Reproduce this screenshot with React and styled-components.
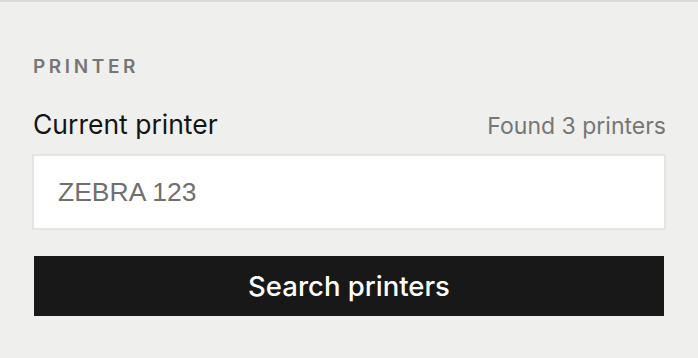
import React from "react";
import styled, { createGlobalStyle } from "styled-components";

const Global = createGlobalStyle`
  html, body { margin: 0; padding: 0; background: #efefed; }
  body { font-family: Inter, "Noto Sans", sans-serif; }
  * { box-sizing: border-box; }
`;

const Panel = styled.section`
  border-top: 2px solid #d9d9d7;
  padding: 0 32px;
  height: 358px;
`;

const SectionLabel = styled.h2`
  margin: 0;
  padding-top: 53px;
  padding-left: 1px;
  font-size: 19px;
  line-height: 24px;
  font-weight: 600;
  letter-spacing: 0.19em;
  color: #767676;
  text-transform: uppercase;
`;

const FieldHeader = styled.div`
  display: flex;
  justify-content: space-between;
  align-items: baseline;
  margin-top: 29px;
  padding-left: 1px;
  height: 32px;
`;

const FieldLabel = styled.label`
  font-size: 26.5px;
  line-height: 32px;
  color: #141414;
`;

const FieldHint = styled.span`
  font-size: 23px;
  line-height: 32px;
  color: #767676;
`;

const TextInput = styled.input`
  display: block;
  width: 100%;
  height: 76px;
  margin-top: 14px;
  border: 2px solid #e4e4e2;
  background: #fff;
  padding: 0 24px;
  font-family: "Liberation Sans", Arial, sans-serif;
  font-size: 26.5px;
  color: #707070;
  outline: none;
  &::placeholder { color: #707070; }
`;

const PrimaryButton = styled.button`
  display: block;
  width: calc(100% - 4px);
  margin: 26px 2px 0;
  height: 60px;
  border: none;
  background: #181818;
  color: #fff;
  font-family: Inter, "Noto Sans", sans-serif;
  font-size: 27.5px;
  font-weight: 500;
  cursor: pointer;
`;

export default function App() {
  return (
    <>
      <Global />
      <Panel>
        <SectionLabel>Printer</SectionLabel>
        <FieldHeader>
          <FieldLabel htmlFor="printer">Current printer</FieldLabel>
          <FieldHint>Found 3 printers</FieldHint>
        </FieldHeader>
        <TextInput id="printer" placeholder="ZEBRA 123" />
        <PrimaryButton>Search printers</PrimaryButton>
      </Panel>
    </>
  );
}
